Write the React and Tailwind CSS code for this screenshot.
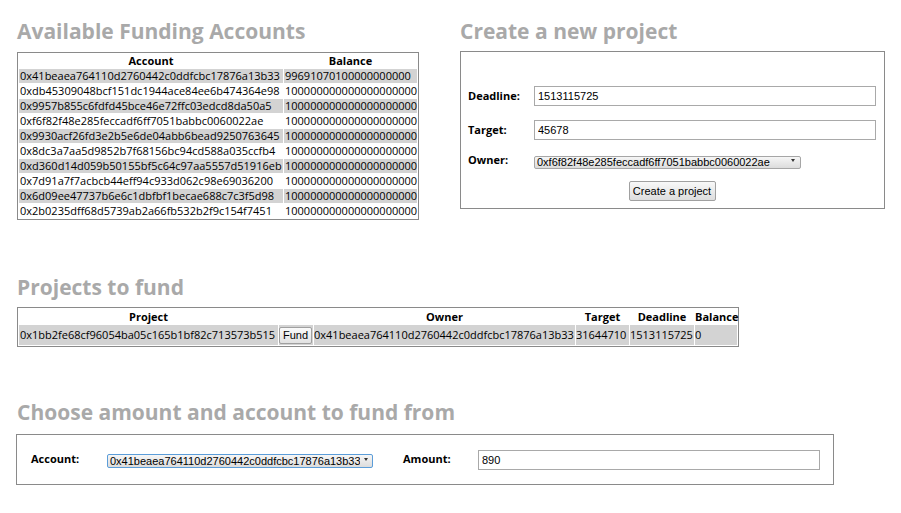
import React from "react";

const accounts = [
  ["0x41beaea764110d2760442c0ddfcbc17876a13b33", "99691070100000000000"],
  ["0xdb45309048bcf151dc1944ace84ee6b474364e98", "100000000000000000000"],
  ["0x9957b855c6fdfd45bce46e72ffc03edcd8da50a5", "100000000000000000000"],
  ["0xf6f82f48e285feccadf6ff7051babbc0060022ae", "100000000000000000000"],
  ["0x9930acf26fd3e2b5e6de04abb6bead9250763645", "100000000000000000000"],
  ["0x8dc3a7aa5d9852b7f68156bc94cd588a035ccfb4", "100000000000000000000"],
  ["0xd360d14d059b50155bf5c64c97aa5557d51916eb", "100000000000000000000"],
  ["0x7d91a7f7acbcb44eff94c933d062c98e69036200", "100000000000000000000"],
  ["0x6d09ee47737b6e6c1dbfbf1becae688c7c3f5d98", "100000000000000000000"],
  ["0x2b0235dff68d5739ab2a66fb532b2f9c154f7451", "100000000000000000000"],
];

const H = ({ children, className = "" }) => (
  <h2 className={"font-['Open_Sans',sans-serif] font-bold text-[21px] leading-[30px] text-[#a9a9a9] whitespace-nowrap " + className}>
    {children}
  </h2>
);

const Select = ({ value, className = "", border = "border-[#a6a6a6]", arrowRight = "right-[6px]" }) => (
  <div className={"relative " + className}>
    <select
      defaultValue={value}
      className={"appearance-none w-full h-full border rounded-[2px] bg-linear-to-b from-[#f6f6f6] to-[#dcdcdc] pl-[2px] pr-[12px] text-[11px] leading-[11px] text-black font-['Liberation_Sans',Arial,sans-serif] outline-none " + border}
    >
      <option value={value}>{value}</option>
    </select>
    <span className={"absolute top-0 bottom-0 flex items-center pointer-events-none " + arrowRight}>
      <svg width="4" height="3" viewBox="0 0 4 3"><polygon points="0,0 4,0 2,3" fill="#333" /></svg>
    </span>
  </div>
);

const Input = ({ value, className = "" }) => (
  <input
    defaultValue={value}
    className={"h-[20px] border border-[#a9a9a9] bg-white pl-[3px] text-[11px] text-black font-['Liberation_Sans',Arial,sans-serif] outline-none " + className}
  />
);

export default function App() {
  return (
    <div className="w-[901px] h-[513px] bg-white overflow-hidden pt-[16px] font-['Open_Sans',sans-serif] text-[11px] text-black">
      <div className="flex items-start">
        <div className="ml-[17px] w-[402px]">
          <H>Available Funding Accounts</H>
          <table className="mt-[6px] table-fixed w-[402px] border border-[#8a8a8a] border-separate border-spacing-[1px]">
            <colgroup>
              <col className="w-[264px]" />
              <col className="w-[133px]" />
            </colgroup>
            <thead>
              <tr>
                <th className="h-[14px] p-0 leading-[14px] font-bold text-center">Account</th>
                <th className="h-[14px] p-0 leading-[14px] font-bold text-center">Balance</th>
              </tr>
            </thead>
            <tbody>
              {accounts.map(([a, b], i) => (
                <tr key={a}>
                  <td className={"h-[14px] p-0 pl-[1px] leading-[14px] whitespace-nowrap overflow-hidden " + (i % 2 === 0 ? "bg-[#d3d3d3]" : "")}>{a}</td>
                  <td className={"h-[14px] p-0 pl-[1px] leading-[14px] whitespace-nowrap overflow-hidden " + (i % 2 === 0 ? "bg-[#d3d3d3]" : "")}>{b}</td>
                </tr>
              ))}
            </tbody>
          </table>
        </div>

        <div className="ml-[41px] w-[425px]">
          <H>Create a new project</H>
          <div className="mt-[5px] border border-[#8a8a8a] pt-[34px] pb-[7px] pl-[7px] pr-[8px]">
            <div className="flex items-center h-[20px]">
              <label className="w-[66px] font-bold">Deadline:</label>
              <Input value="1513115725" className="flex-1" />
            </div>
            <div className="flex items-center h-[20px] mt-[14px]">
              <label className="w-[66px] font-bold">Target:</label>
              <Input value="45678" className="flex-1" />
            </div>
            <div className="flex items-center h-[13px] mt-[14px]">
              <label className="w-[66px] font-bold">Owner:</label>
              <Select value="0xf6f82f48e285feccadf6ff7051babbc0060022ae" className="w-[267px] h-[13px]" arrowRight="right-[6px]" />
            </div>
            <div className="flex justify-center mt-[14px]">
              <button className="h-[20px] w-[87px] border border-[#a0a0a0] rounded-[2px] bg-linear-to-b from-[#f8f8f8] to-[#dddddd] text-[11px] text-black font-['Liberation_Sans',Arial,sans-serif]">
                Create a project
              </button>
            </div>
          </div>
        </div>
      </div>

      <div className="ml-[17px] mt-[52px]">
        <H>Projects to fund</H>
        <table className="mt-[5px] table-fixed w-[722px] border border-[#8a8a8a] border-separate border-spacing-[1px]">
          <colgroup>
            <col className="w-[259px]" />
            <col className="w-[34px]" />
            <col className="w-[261px]" />
            <col className="w-[53px]" />
            <col className="w-[64px]" />
            <col className="w-[42px]" />
          </colgroup>
          <thead>
            <tr>
              <th className="h-[15px] p-0 leading-[15px] font-bold text-center whitespace-nowrap">Project</th>
              <th className="h-[15px] p-0"></th>
              <th className="h-[15px] p-0 leading-[15px] font-bold text-center whitespace-nowrap">Owner</th>
              <th className="h-[15px] p-0 leading-[15px] font-bold text-center whitespace-nowrap">Target</th>
              <th className="h-[15px] p-0 leading-[15px] font-bold text-center whitespace-nowrap">Deadline</th>
              <th className="h-[15px] p-0 leading-[15px] font-bold text-center whitespace-nowrap">Balance</th>
            </tr>
          </thead>
          <tbody>
            <tr>
              <td className="h-[20px] p-0 pl-[1px] bg-[#d3d3d3] whitespace-nowrap overflow-hidden">0x1bb2fe68cf96054ba05c165b1bf82c713573b515</td>
              <td className="h-[20px] p-0 bg-[#d3d3d3]">
                <button className="block h-[17px] w-[33px] border border-[#a0a0a0] rounded-[2px] bg-linear-to-b from-[#fafafa] to-[#e2e2e2] text-[11px] leading-[15px] text-black font-['Liberation_Sans',Arial,sans-serif]">
                  Fund
                </button>
              </td>
              <td className="h-[20px] p-0 bg-[#d3d3d3] whitespace-nowrap overflow-hidden">0x41beaea764110d2760442c0ddfcbc17876a13b33</td>
              <td className="h-[20px] p-0 bg-[#d3d3d3] whitespace-nowrap overflow-hidden">31644710</td>
              <td className="h-[20px] p-0 bg-[#d3d3d3] whitespace-nowrap overflow-hidden">1513115725</td>
              <td className="h-[20px] p-0 bg-[#d3d3d3] whitespace-nowrap overflow-hidden">0</td>
            </tr>
          </tbody>
        </table>
      </div>

      <div className="ml-[16px] mt-[50px]">
        <H className="ml-[1px]">Choose amount and account to fund from</H>
        <div className="mt-[7px] w-[818px] h-[51px] border border-[#8a8a8a] flex items-center pl-[14px]">
          <label className="w-[76px] font-bold">Account:</label>
          <Select
            value="0x41beaea764110d2760442c0ddfcbc17876a13b33"
            className="w-[266px] h-[14px]"
            border="border-[#5b9dd9]"
            arrowRight="right-[5px]"
          />
          <label className="ml-[30px] w-[75px] font-bold">Amount:</label>
          <Input value="890" className="w-[342px]" />
        </div>
      </div>
    </div>
  );
}
